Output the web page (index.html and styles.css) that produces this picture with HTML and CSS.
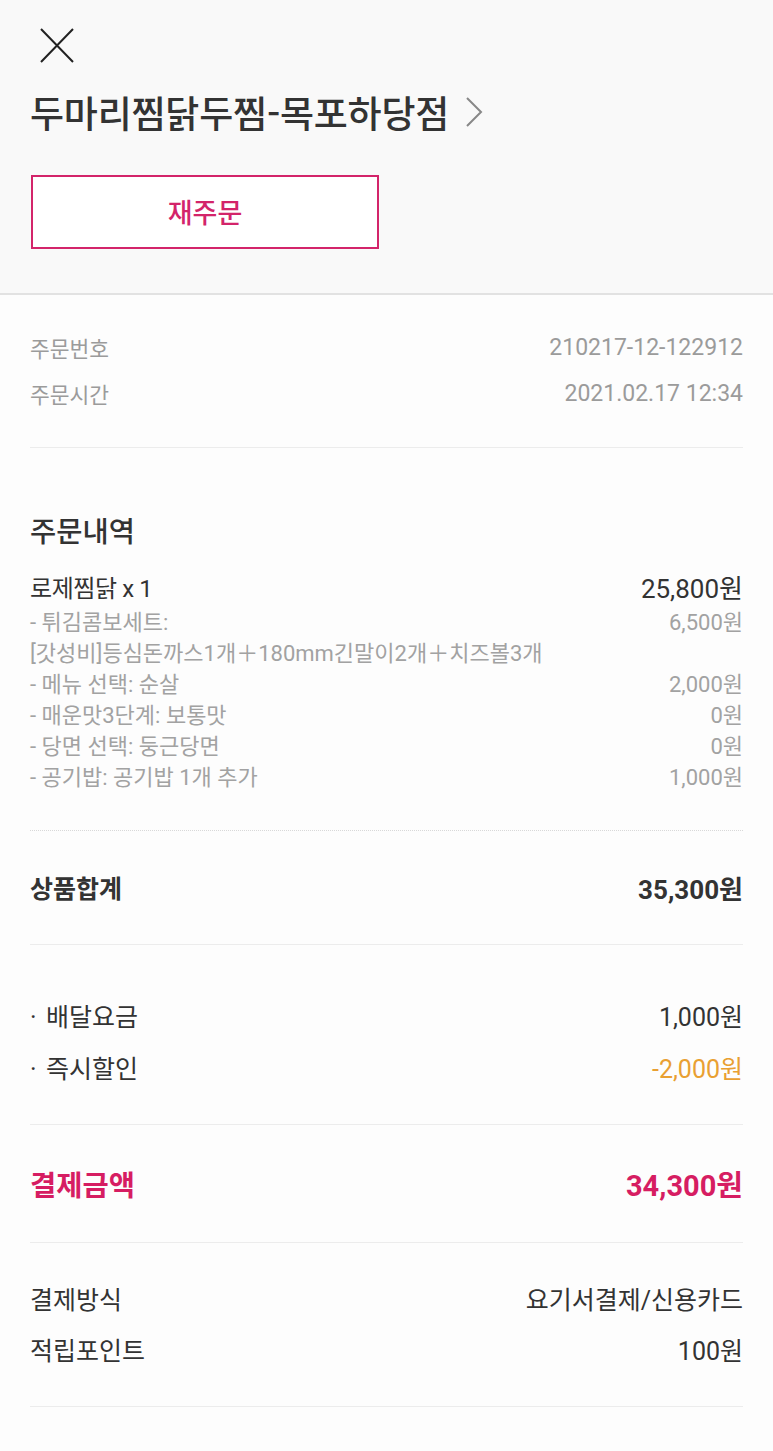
FILE: index.html
```html
<!DOCTYPE html>
<html lang="ko">
<head>
<meta charset="utf-8">
<title>주문상세</title>
<link rel="stylesheet" href="styles.css">
</head>
<body>
<div class="page">
  <header class="header">
    <div class="close">
      <svg width="36" height="36" viewBox="0 0 36 36"><path d="M2 1 L34 34 M34 1 L2 34" stroke="#222" stroke-width="2" fill="none"/></svg>
    </div>
    <h1 class="store">두마리찜닭두찜-목포하당점<svg class="chev" width="20" height="32" viewBox="0 0 20 32"><path d="M3 2 L17 16 L3 30" stroke="#888" stroke-width="2" fill="none"/></svg></h1>
    <button class="reorder">재주문</button>
  </header>

  <section class="sec info">
    <div class="row"><span class="k">주문번호</span><span class="v">210217-12-122912</span></div>
    <div class="row"><span class="k">주문시간</span><span class="v">2021.02.17 12:34</span></div>
  </section>

  <section class="sec order">
    <h2 class="h2">주문내역</h2>
    <div class="item"><span class="k">로제찜닭 x 1</span><span class="v">25,800원</span></div>
    <div class="opts">
      <div class="opt"><span class="k">- 튀김콤보세트:</span><span class="v">6,500원</span></div>
      <div class="opt"><span class="k">[갓성비]등심돈까스1개＋180mm긴말이2개＋치즈볼3개</span><span class="v"></span></div>
      <div class="opt"><span class="k">- 메뉴 선택: 순살</span><span class="v">2,000원</span></div>
      <div class="opt"><span class="k">- 매운맛3단계: 보통맛</span><span class="v">0원</span></div>
      <div class="opt"><span class="k">- 당면 선택: 둥근당면</span><span class="v">0원</span></div>
      <div class="opt"><span class="k">- 공기밥: 공기밥 1개 추가</span><span class="v">1,000원</span></div>
    </div>
  </section>

  <section class="sec subtotal">
    <div class="sum"><span class="k">상품합계</span><span class="v">35,300원</span></div>
  </section>

  <section class="sec fees">
    <div class="fee"><span class="k"><span class="dot">·</span>배달요금</span><span class="v">1,000원</span></div>
    <div class="fee"><span class="k"><span class="dot">·</span>즉시할인</span><span class="v discount">-2,000원</span></div>
  </section>

  <section class="sec total">
    <div class="tot"><span class="k">결제금액</span><span class="v">34,300원</span></div>
  </section>

  <section class="sec pay">
    <div class="payrow"><span class="k">결제방식</span><span class="v">요기서결제/신용카드</span></div>
    <div class="payrow"><span class="k">적립포인트</span><span class="v">100원</span></div>
  </section>
</div>
</body>
</html>
```

FILE: styles.css
```css
html, body {
  margin: 0;
  padding: 0;
  background: #fdfdfd;
}
body {
  font-family: Roboto, "Noto Sans CJK KR", sans-serif;
  color: #333;
}
.page {
  width: 773px;
}
.header {
  background: #f9f9f9;
  padding: 28px 30px 44px;
  border-bottom: 2px solid #e2e2e2;
}
.close {
  margin-left: 9px;
  width: 36px;
  height: 36px;
}
.close svg {
  display: block;
}
.store {
  margin: 28px 0 0 0;
  font-family: "Noto Sans CJK KR", sans-serif;
  font-size: 37px;
  line-height: 40px;
  font-weight: 500;
  letter-spacing: -0.2px;
  color: #333;
  display: flex;
  align-items: center;
}
.chev {
  margin-left: 15px;
  margin-top: 0;
}
.reorder {
  display: block;
  margin: 43px 0 0 1px;
  width: 348px;
  height: 74px;
  background: #fff;
  border: 2px solid #d3246a;
  color: #d3246a;
  font-family: "Noto Sans CJK KR", sans-serif;
  font-size: 27px;
  font-weight: 500;
  padding: 0 0 2px;
}
.sec {
  margin: 0 30px;
  border-bottom: 1px solid #ececec;
}
.row, .item, .opt, .sum, .fee, .tot, .payrow {
  display: flex;
  justify-content: space-between;
  align-items: center;
}
.info {
  padding: 29px 0 31px;
}
.info .row {
  height: 46px;
  color: #9b9b9b;
}
.info .k {
  font-size: 21.5px;
}
.info .v {
  font-size: 23px;
}
.order {
  padding: 67px 0 40px;
  border-bottom: 1px dotted #d8d8d8;
}
.h2 {
  margin: 0;
  font-size: 28.5px;
  line-height: 36px;
  font-weight: 500;
  color: #333;
}
.item {
  margin-top: 18px;
  height: 34px;
  font-size: 24px;
  color: #333;
}
.item .k {
  letter-spacing: -0.4px;
}
.item .v {
  font-size: 26px;
}
.opts {
  margin-top: 1px;
}
.opt {
  height: 31px;
  font-size: 22px;
  color: #a2a2a2;
}
.subtotal {
  padding: 38px 0 39px;
}
.sum {
  height: 36px;
  font-size: 25px;
  font-weight: 700;
  color: #333;
}
.sum .v {
  font-size: 26px;
}
.fees {
  padding: 44px 0 31px;
}
.fee {
  height: 52px;
  font-size: 25px;
  color: #333;
}
.dot {
  display: inline-block;
  width: 16px;
}
.discount {
  color: #e9a032;
}
.total {
  padding: 40px 0 41px;
}
.tot {
  height: 36px;
  font-size: 28.5px;
  font-weight: 700;
  color: #d61d62;
}
.tot .v {
  font-size: 29px;
}
.pay {
  padding: 29px 0 32px;
}
.payrow {
  height: 51px;
  font-size: 25px;
  color: #333;
}
```
